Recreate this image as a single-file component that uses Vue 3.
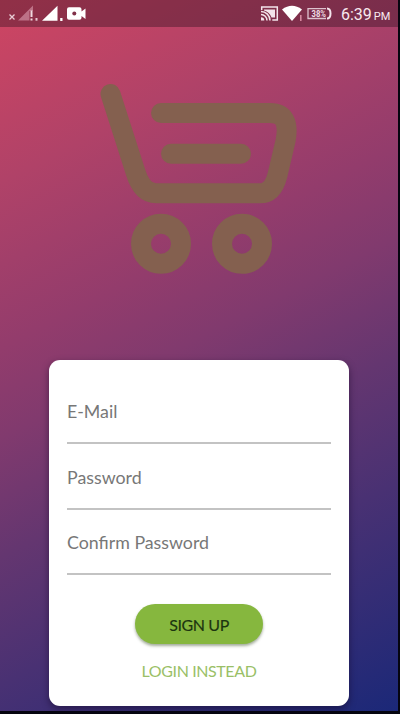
<script setup>
const fields = [
  { label: 'E-Mail', name: 'email' },
  { label: 'Password', name: 'password' },
  { label: 'Confirm Password', name: 'confirm' },
]
</script>

<template>
  <div class="device">
    <main class="screen">
      <header class="status">
        <svg class="left-icons" width="92" height="27" viewBox="0 0 92 27">
          <path d="M9.500 14.500l5 5m0-5l-5 5" stroke="#e9cdd5" stroke-width="1.300" />
          <path d="M18 20.500L33 5.500V11h-3.500v9.500z" fill="#bd7186" />
          <path d="M31.500 10.500v6.500m0 1.500v2" stroke="#f0d9df" stroke-width="2" />
          <path d="M35.500 18h2v2.700h-2z" fill="#e6c5ce" />
          <path d="M42 20.800L57.500 5.800V20.800zM60.200 18h2.300v3h-2.300z" fill="#fff" />
          <path d="M69 7.200h10.500q2 0 2 2v2.300l4-3v10.500l-4-3v1.800q0 2-2 2H69q-2 0-2-2V9.200q0-2 2-2z" fill="#fff" />
          <circle cx="74.300" cy="13.500" r="2" fill="#813048" />
        </svg>
        <div class="right">
          <svg width="74" height="27" viewBox="258 0 74 27">
            <g fill="none" stroke="#f3e4eb" stroke-width="1.500">
              <path d="M261.700 10V7h15.600v13h-5" />
              <path d="M261 11.500a9 9 0 0 1 9 9M261 14.500a6 6 0 0 1 6 6" />
            </g>
            <path d="M261 17.200a3.300 3.300 0 0 1 3.300 3.300H261zM264 9.500h11v8h-3.500a11 11 0 0 0-7.500-7z" fill="#f3e4eb" />
            <path d="M282 9.500q10-7.500 20 0L292 21z" fill="#fff" />
            <path d="M300.800 15v6" stroke="#d6879f" stroke-width="1.600" />
            <path d="M326 8.700h-18v9.800h18" fill="none" stroke="#ddc2ce" stroke-width="1.300" />
            <path d="M327 8.500q3.500 0 3.500 5t-3.500 5" fill="none" stroke="#f3e4eb" stroke-width="2" />
            <text x="311.500" y="16.700" textLength="14.500" lengthAdjust="spacingAndGlyphs" class="percent">38%</text>
          </svg>
          <span class="clock">6:39</span><span class="period">PM</span>
        </div>
      </header>

      <svg class="cart" width="200" height="196" viewBox="98 81 200 196" fill="none" stroke="#84604f" stroke-width="20" stroke-linecap="round">
        <path d="M110.500 94L135.500 172Q142 193.300 156 193.300H260Q273 193.300 277.500 175L285.500 141Q291 113 270 113H161" stroke-linejoin="round" />
        <path d="M171 153.700H241" />
        <circle cx="161" cy="243.800" r="20" />
        <circle cx="242" cy="243.800" r="20" />
      </svg>

      <form class="card" @submit.prevent>
        <label v-for="field in fields" :key="field.name" class="field">{{ field.label }}</label>
        <button class="signup" type="submit">SIGN UP</button>
        <button class="login" type="button">LOGIN INSTEAD</button>
      </form>
    </main>
  </div>
</template>

<style>
body {
  margin: 0;
  background: #05050f;
}
</style>

<style scoped>
.device {
  box-sizing: border-box;
  width: 400px;
  height: 714px;
  padding: 0 2px 3px 0;
  background: #05050f;
  overflow: hidden;
}
.screen {
  height: 711px;
  display: flex;
  flex-direction: column;
  background: linear-gradient(153deg, #cf4562 0%, #b04268 20%, #933c6c 38%, #813a6e 48%, #643670 61%, #493173 75%, #1b2878 100%);
  font-family: Lato, sans-serif;
}
.status {
  height: 27px;
  flex: none;
  display: flex;
  justify-content: space-between;
  background: rgba(25, 10, 20, 0.34);
}
.right {
  display: flex;
  align-items: baseline;
  width: 140px;
  color: #f8e9ef;
  font-family: Roboto, sans-serif;
}
.right svg {
  align-self: flex-start;
  flex: none;
}
.percent {
  fill: #eedce4;
  font: 700 9px Roboto, sans-serif;
}
.clock {
  margin-left: 9px;
  font-size: 16px;
  line-height: 29px;
}
.period {
  margin-left: 2px;
  font-size: 11px;
}
.cart {
  flex: none;
  margin: 54px 0 0 98px;
}
.card {
  box-sizing: border-box;
  flex: none;
  width: 300px;
  height: 346px;
  margin: 83px 0 0 49px;
  padding: 18.500px 18px 0;
  display: flex;
  flex-direction: column;
  align-items: center;
  border-radius: 11px;
  background: #fff;
  box-shadow: 0 3px 7px rgba(20, 5, 35, 0.5);
}
.field {
  box-sizing: border-box;
  flex: none;
  width: 264px;
  height: 65.500px;
  padding-top: 20.500px;
  border-bottom: 2px solid #c3c3c3;
  color: #777;
  font-size: 17.800px;
  line-height: 24px;
}
button {
  border: 0;
  padding: 0;
  font-family: inherit;
}
.signup {
  flex: none;
  width: 128px;
  height: 40px;
  margin-top: 29px;
  padding-top: 1px;
  border-radius: 20px;
  background: #86b73e;
  color: #1c3410;
  font-size: 16px;
  letter-spacing: -0.400px;
  -webkit-text-stroke: 0.150px #1c3410;
  box-shadow: 0 2px 3px rgba(50, 70, 30, 0.45);
}
.login {
  margin-top: 17px;
  background: none;
  color: #9abf67;
  font-size: 16px;
  letter-spacing: -0.400px;
  line-height: 20px;
}
</style>
